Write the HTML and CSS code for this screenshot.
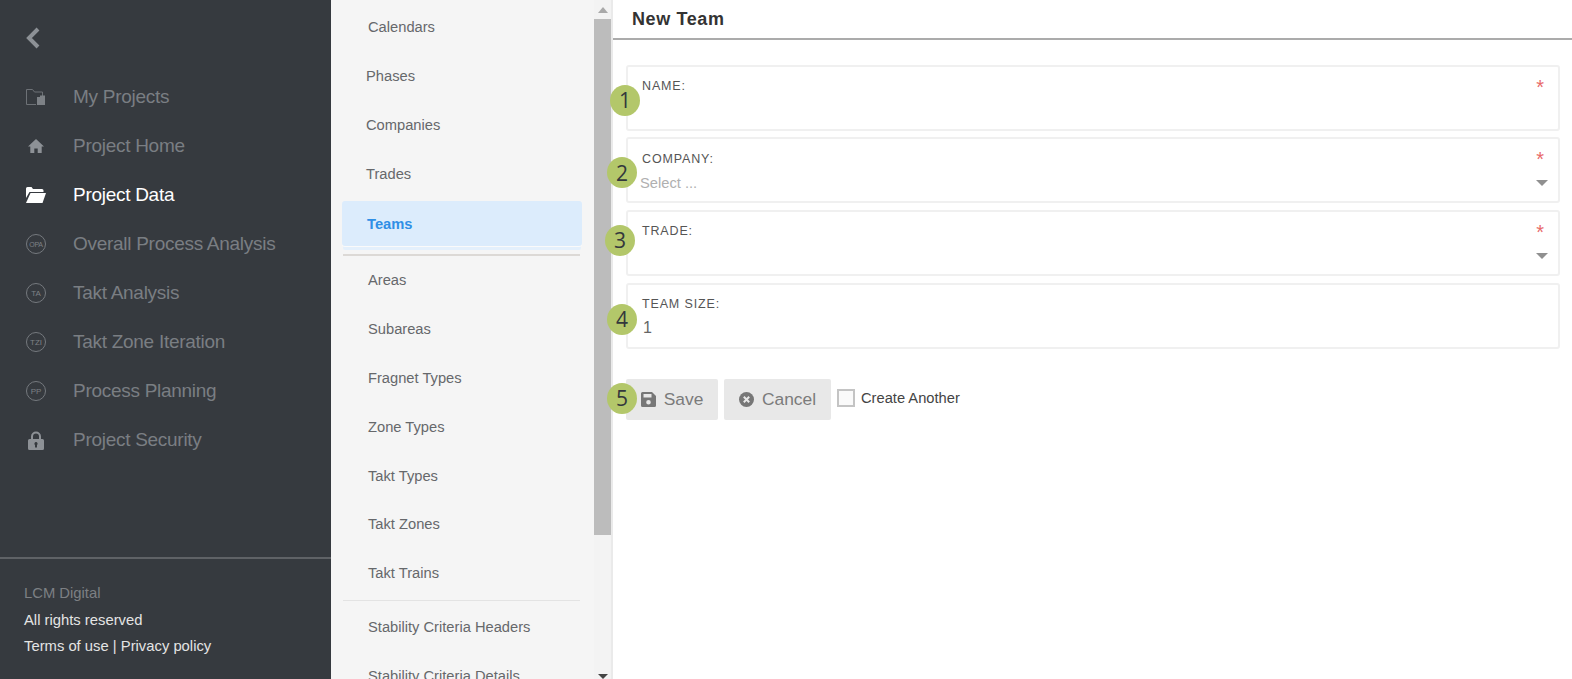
FILE: index.html
```html
<!DOCTYPE html>
<html lang="en">
<head>
<meta charset="utf-8">
<title>New Team</title>
<link rel="stylesheet" href="styles.css">
</head>
<body>
<div class="app">
  <aside class="side">
    <div class="side-top">
      <svg class="back" width="16" height="22" viewBox="0 0 16 22"><path d="M13 2 L4 11 L13 20" fill="none" stroke="#8d9196" stroke-width="4"/></svg>
      <nav class="nav">
        <a class="nav-item"><span class="nav-icon"><svg width="20" height="16" viewBox="0 0 20 16"><path d="M.5 15.5V.5h6l2 2.500h8v4M10 15.500H.5" fill="none" stroke="#6d7176"/><path d="M11 8h3V6.500h5V16h-8z" fill="#7d8186"/></svg></span>My Projects</a>
        <a class="nav-item"><span class="nav-icon"><svg width="16" height="14" viewBox="0 0 16 14"><path d="M8 0 L16 7.500H13.700V14H9.700V9.500H6.300V14H2.300V7.500H0z" fill="#8d9196"/></svg></span>Project Home</a>
        <a class="nav-item active"><span class="nav-icon"><svg width="20" height="16" viewBox="0 0 20 16"><path d="M0 2V1.500Q0 0 1.500 0h4l1.500 2h9q1.500 0 1.500 1.500V5H3.500L0 11z" fill="#fff"/><path d="M4.500 6H20l-3.500 10H0z" fill="#fff"/></svg></span>Project Data</a>
        <a class="nav-item"><span class="nav-icon"><span class="ring ring-sm">OPA</span></span>Overall Process Analysis</a>
        <a class="nav-item"><span class="nav-icon"><span class="ring">TA</span></span>Takt Analysis</a>
        <a class="nav-item"><span class="nav-icon"><span class="ring">TZI</span></span>Takt Zone Iteration</a>
        <a class="nav-item"><span class="nav-icon"><span class="ring">PP</span></span>Process Planning</a>
        <a class="nav-item"><span class="nav-icon"><svg width="16" height="19" viewBox="0 0 16 19"><path fill-rule="evenodd" d="M3 8V5.500a5 5 0 0 1 10 0V8h1.500q1.500 0 1.500 1.500V17.500q0 1.500-1.500 1.500h-13Q0 19 0 17.500V9.500Q0 8 1.500 8zM5 8h6V5.500a3 3 0 0 0-6 0zM8 11a1.700 1.700 0 0 0-1 3v2.500h2V14a1.700 1.700 0 0 0-1-3z" fill="#8d9196"/></svg></span>Project Security</a>
      </nav>
    </div>
    <footer class="side-foot">
      <div class="brand">LCM Digital</div>
      <div>All rights reserved</div>
      <div>Terms of use | Privacy policy</div>
    </footer>
  </aside>

  <div class="sub">
    <div class="sub-list">
      <a class="sub-item nudge">Calendars</a>
      <a class="sub-item">Phases</a>
      <a class="sub-item">Companies</a>
      <a class="sub-item">Trades</a>
      <a class="sub-item current">Teams</a>
      <hr class="rule rule-strong">
      <a class="sub-item nudge">Areas</a>
      <a class="sub-item nudge">Subareas</a>
      <a class="sub-item nudge">Fragnet Types</a>
      <a class="sub-item nudge">Zone Types</a>
      <a class="sub-item nudge">Takt Types</a>
      <a class="sub-item nudge">Takt Zones</a>
      <a class="sub-item nudge">Takt Trains</a>
      <hr class="rule">
      <a class="sub-item nudge">Stability Criteria Headers</a>
      <a class="sub-item nudge">Stability Criteria Details</a>
    </div>
    <div class="scrollbar">
      <span class="arrow arrow-up"></span>
      <span class="thumb"></span>
      <span class="arrow arrow-down"></span>
    </div>
  </div>

  <main class="main">
    <h1 class="title">New Team</h1>
    <form class="form">
      <div class="field">
        <span class="step step-1">1</span>
        <label class="label">NAME:</label>
        <span class="req">*</span>
      </div>
      <div class="field">
        <span class="step step-2">2</span>
        <label class="label">COMPANY:</label>
        <span class="req">*</span>
        <div class="value placeholder">Select ...</div>
        <span class="caret"></span>
      </div>
      <div class="field">
        <span class="step step-3">3</span>
        <label class="label">TRADE:</label>
        <span class="req">*</span>
        <span class="caret"></span>
      </div>
      <div class="field">
        <span class="step step-4">4</span>
        <label class="label">TEAM SIZE:</label>
        <div class="value number">1</div>
      </div>
      <div class="actions">
        <span class="step step-5">5</span>
        <button type="button" class="btn btn-save"><svg width="15" height="15" viewBox="0 0 15 15"><path fill-rule="evenodd" d="M1.500 0H11l4 4v9.500q0 1.500-1.500 1.500h-12Q0 15 0 13.500v-12Q0 0 1.500 0zM2.500 2v3.500h8V2zM7.500 8a2.300 2.300 0 1 0 0 4.600 2.300 2.300 0 0 0 0-4.600z" fill="#777"/></svg>Save</button>
        <button type="button" class="btn btn-cancel"><svg width="15" height="15" viewBox="0 0 15 15"><circle cx="7.500" cy="7.500" r="7.500" fill="#777"/><path d="M4.800 4.800l5.400 5.400M10.200 4.800l-5.400 5.400" stroke="#e8e8e8" stroke-width="2"/></svg>Cancel</button>
        <span class="check"></span>
        <span class="check-label">Create Another</span>
      </div>
    </form>
  </main>
</div>
</body>
</html>
```
FILE: styles.css
```css
* { box-sizing: border-box; }
html, body { margin: 0; height: 100%; overflow: hidden; }
body { font-family: "Liberation Sans", Arial, sans-serif; background: #fff; }
.app { display: flex; height: 679px; }

.side { width: 331px; flex: none; background: #363a3f; display: flex; flex-direction: column; justify-content: space-between; }
.side-top { padding: 27px 0 0 26px; }
.back { display: block; margin-left: -1px; }
.nav { margin-top: 23.500px; display: flex; flex-direction: column; }
.nav-item { height: 49px; display: flex; align-items: center; font-size: 19px; letter-spacing: -.28px; color: #7a7e83; }
.nav-item.active { color: #fff; }
.nav-icon { width: 47px; flex: none; display: flex; align-items: center; }
.nav-icon svg { display: block; width: 20px; }
.ring { width: 20px; height: 20px; border: 1px solid #75797e; border-radius: 50%; display: flex; align-items: center; justify-content: center; font-size: 8px; letter-spacing: 0; color: #7d8186; }
.ring-sm { font-size: 7px; letter-spacing: -.3px; }
.side-foot { border-top: 2px solid #5f6266; height: 122px; padding: 21px 0 0 24px; font-size: 14.800px; line-height: 26.500px; color: #e4e4e4; }
.brand { color: #7d8084; }

.sub { width: 282px; flex: none; background: #f5f5f5; border-right: 2px solid #eaeaea; display: flex; height: 100%; overflow: hidden; }
.sub-list { width: 263px; flex: none; padding: 2.500px 0 0 0; }
.sub-item { display: flex; align-items: center; height: 49px; padding-left: 35px; font-size: 14.700px; color: #66686b; }
.sub-item.nudge { padding-left: 37px; }
.sub-item.current { height: 45px; margin: 2.500px 12px 0 11px; padding-left: 25px; background: #dcecfc; border-radius: 3px; color: #2f8fe6; font-weight: bold; box-shadow: 0 1px 0 #fafafa, 0 5px 0 -1px #e4f0fc; }
.rule { border: 0; height: 1px; margin: 2px 14px 2px 12px; background: #e3e3e3; }
.rule-strong { height: 2px; margin: 8px 14px 0 12px; background: #dcd9d6; }
.rule-strong ~ .sub-item { height: 48.800px; }
.scrollbar { width: 17px; display: flex; flex-direction: column; align-items: center; background: #f3f3f3; }
.thumb { width: 17px; height: 516px; background: #bcbcbc; flex: none; margin-top: 6px; }
.arrow { width: 0; height: 0; border-left: 5px solid transparent; border-right: 5px solid transparent; flex: none; }
.arrow-up { border-bottom: 6px solid #a9a9a9; margin-top: 7px; }
.arrow-down { border-top: 5px solid #444; margin-top: 139px; }

.main { flex: 1; min-width: 0; }
.title { margin: 0; height: 40px; border-bottom: 2px solid #ababab; padding: 9px 0 0 19px; font-size: 18px; line-height: 20px; font-weight: bold; color: #333; letter-spacing: .6px; }
.form { padding: 24.500px 12px 0 13px; }
.field { position: relative; height: 66px; margin-bottom: 6.700px; border: 2px solid #f0f0f0; border-radius: 3px; padding: 11.500px 0 0 14px; }
.label { display: block; font-size: 12.500px; line-height: 16px; letter-spacing: .85px; color: #555; }
.value { font-size: 14.700px; line-height: 20px; margin-top: 6px; }
.placeholder { color: #b0b0b0; margin-left: -2px; }
.number { font-size: 16px; color: #666; margin-left: 1px; }
.req { position: absolute; right: 14px; top: 10px; font-size: 20px; line-height: 20px; color: #e86a6a; }
.caret { position: absolute; right: 10px; top: 41px; width: 0; height: 0; border-left: 6px solid transparent; border-right: 6px solid transparent; border-top: 6px solid #909090; }
.step { position: absolute; width: 30px; height: 31px; border-radius: 50%; background: #b3c76a; color: #33383c; display: flex; align-items: center; justify-content: center; font-family: "Open Sans", sans-serif; font-size: 21px; z-index: 2; }
.step-1 { left: -18px; top: 18px; }
.step-2 { left: -21px; top: 18px; }
.step-3 { left: -23px; top: 13px; }
.step-4 { left: -21px; top: 19px; }
.step-5 { left: -19px; top: 4px; }
.actions { position: relative; display: flex; align-items: flex-start; margin-top: 30px; }
.btn { display: flex; align-items: center; justify-content: center; gap: 8px; height: 41px; border: 0; border-radius: 2px; background: #e8e8e8; color: #7b7b7b; font-family: inherit; font-size: 17.400px; padding: 0; }
.btn-save { width: 92px; }
.btn-cancel { width: 107px; margin-left: 6px; }
.check { width: 18px; height: 18px; border: 2px solid #c4c4c4; background: #fafafa; margin: 10px 0 0 6px; }
.check-label { margin: 10px 0 0 6px; font-size: 14.700px; line-height: 18px; color: #444; }
```
